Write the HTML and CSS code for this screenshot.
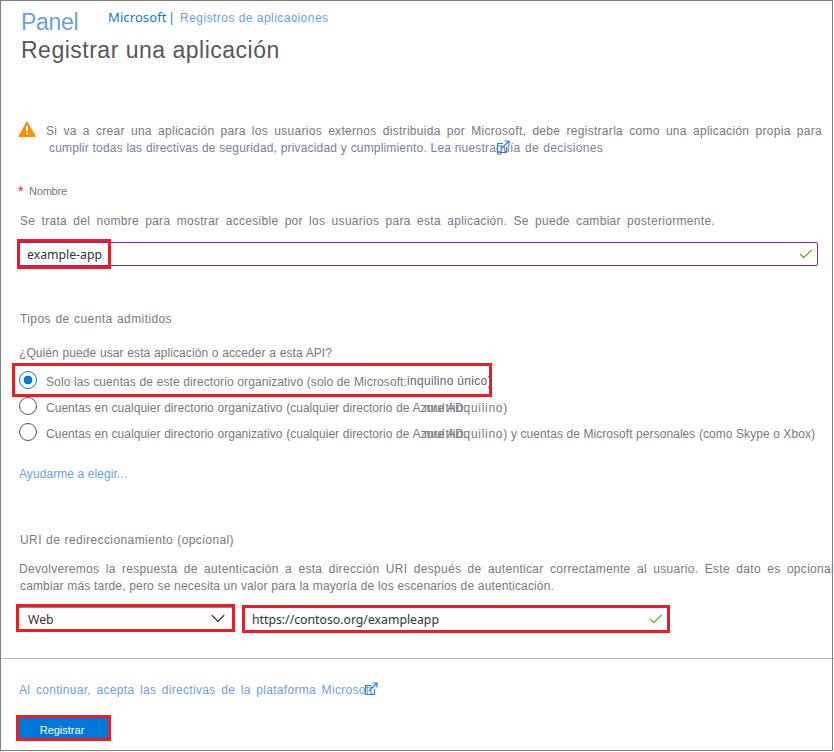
FILE: index.html
```html
<!DOCTYPE html>
<html lang="es">
<head>
<meta charset="utf-8">
<title>Registrar una aplicación</title>
<link rel="stylesheet" href="styles.css">
</head>
<body>
<main class="page">
  <header class="head">
    <div class="crumbs">
      <a class="panel">Panel</a>
      <a class="org">Microsoft |</a>
      <a class="regs">Registros de aplicaciones<svg class="chev" width="6" height="10" viewBox="0 0 6 10"><path d="M1 1l4 4-4 4" fill="none" stroke="#a9a9b0"/></svg></a>
    </div>
    <h1>Registrar una aplicación</h1>
  </header>

  <section class="notice">
    <svg class="warn" width="18" height="16" viewBox="0 0 18 16"><path d="M9 .8 17.3 15.4H.7z" fill="#ff8c00" stroke="#ff8c00" stroke-linejoin="round"/><path d="M8 5h2v5H8zM8 11.5h2v2H8z" fill="#fff"/></svg>
    <div class="notice-text">
      <p class="fit n1">Si va a crear una aplicación para los usuarios externos distribuida por Microsoft, debe registrarla como una aplicación propia para</p>
      <p class="n2"><span class="fit n2a">cumplir todas las directivas de seguridad, privacidad y cumplimiento. Lea nuestra</span><span class="fit n2b">guía de decisiones</span><svg class="ext ext-a" width="14" height="14" viewBox="0 0 14 14"><path d="M7 3.500H1.500v9h9V7M5 9l8-8M8.500 1H13v4.500" fill="none" stroke="#2f80e4" stroke-width="1.200"/></svg></p>
    </div>
  </section>

  <section class="name">
    <label><b class="star">*</b><span class="fit lname">Nombre</span></label>
    <p class="fit hint">Se trata del nombre para mostrar accesible por los usuarios para esta aplicación. Se puede cambiar posteriormente.</p>
    <div class="input name-input"><span class="fit val-name">example-app</span><svg class="check" width="14" height="10" viewBox="0 0 14 10"><path d="M1 5l3.700 3.500L12.800 1" fill="none" stroke="#6bb02e" stroke-width="1.300"/></svg><i class="mark mark-name"></i></div>
  </section>

  <section class="accounts">
    <h2 class="fit acc-title">Tipos de cuenta admitidos</h2>
    <p class="fit question">¿Quién puede usar esta aplicación o acceder a esta API?</p>
    <div class="option"><i class="radio on"></i><span class="fit o1">Solo las cuentas de este directorio organizativo (solo de Microsoft:</span><span class="fit o1b">inquilino único)</span><i class="mark mark-option"></i></div>
    <div class="option"><i class="radio"></i><span class="fit o2">Cuentas en cualquier directorio organizativo (cualquier directorio de Azure AD:</span><span class="fit o2b">multiinquilino)</span></div>
    <div class="option"><i class="radio"></i><span class="fit o2">Cuentas en cualquier directorio organizativo (cualquier directorio de Azure AD:</span><span class="fit o2b">multiinquilino)</span><span class="fit o3b">y cuentas de Microsoft personales (como Skype o Xbox)</span></div>
    <a class="fit help">Ayudarme a elegir...</a>
  </section>

  <section class="redirect">
    <h2 class="fit red-title">URI de redireccionamiento (opcional)</h2>
    <p class="fit r1">Devolveremos la respuesta de autenticación a esta dirección URI después de autenticar correctamente al usuario. Este dato es opcional</p>
    <p class="fit r2">cambiar más tarde, pero se necesita un valor para la mayoría de los escenarios de autenticación.</p>
    <div class="fields">
      <div class="field select"><span class="fit val-web">Web</span><svg width="14" height="9" viewBox="0 0 14 9"><path d="M.8 1.200 7 7.400l6.200-6.200" fill="none" stroke="#222" stroke-width="1.200"/></svg></div>
      <div class="field uri"><span class="fit val-uri">https://contoso.org/exampleapp</span><svg width="14" height="10" viewBox="0 0 14 10"><path d="M1 5l3.700 3.500L12.800 1" fill="none" stroke="#6bb02e" stroke-width="1.300"/></svg></div>
    </div>
  </section>

  <footer>
    <a class="terms"><span class="fit t1">Al continuar, acepta las directivas de la plataforma Microsoft</span><svg class="ext ext-b" width="14" height="14" viewBox="0 0 14 14"><path d="M7 3.500H1.500v9h9V7M5 9l8-8M8.500 1H13v4.500" fill="none" stroke="#2f80e4" stroke-width="1.200"/></svg></a>
    <button>Registrar</button>
  </footer>
</main>
</body>
</html>
```
FILE: styles.css
```css
*, *::after { box-sizing: border-box; }
body { margin: 0; background: #fff; overflow: hidden; }
.page { position: relative; width: 834px; height: 752px; padding-top: 1px; font: 12px/18px "Liberation Sans", Arial, sans-serif; color: #7b7780; }
.page::after { content: ""; position: absolute; left: 0; top: 0; width: 833px; height: 751px; border: 1px solid #7f7f7f; pointer-events: none; }
p, h1, h2 { margin: 0; font-weight: 400; }
h2 { font-size: 12px; }
.fit { display: block; white-space: nowrap; text-align: justify; text-align-last: justify; letter-spacing: .3px; }

.head { height: 118px; padding: 4px 0 0 21px; }
.crumbs { display: flex; height: 30px; color: #6b9fde; }
.panel { width: 87px; font-size: 23px; line-height: 35px; letter-spacing: -.3px; }
.org { width: 72px; font: 13px/24px "Noto Sans", "Open Sans", sans-serif; letter-spacing: .1px; word-spacing: -2px; color: #1079d4; }
.regs { position: relative; line-height: 26px; letter-spacing: .47px; white-space: nowrap; }
.chev { position: absolute; left: 112px; top: 8px; }
h1 { font-size: 23px; line-height: 30px; color: #5a5659; letter-spacing: .5px; }

.notice { display: flex; height: 64px; padding-left: 18px; }
.warn { margin-top: 2px; }
.notice-text { padding: 3px 0 0 10px; }
.n1 { width: 776px; }
.n2 { position: relative; display: flex; padding-left: 3px; margin-top: -1px; color: #75829f; }
.n2a { width: 447px; letter-spacing: .17px; }
.n2b { width: 107px; }
.ext { position: absolute; }
.ext-a { left: 450px; top: 1px; }

.name { height: 127px; padding-left: 18px; }
label { display: flex; height: 17px; }
.star { width: 11px; font-size: 14px; line-height: 16px; font-weight: 400; color: #e8202a; }
.lname { width: 38px; font-size: 11px; line-height: 16px; letter-spacing: -.2px; }
.hint { width: 695px; margin: 12px 0 0 2px; }
.input { position: relative; display: flex; align-items: center; justify-content: space-between; width: 800px; height: 24px; margin-top: 12px; padding: 0 4px 0 8px; border: 1px solid #8426a0; border-radius: 2px; }
.val-name, .val-web, .val-uri { padding-top: 2px; font: 12.25px/20px "Noto Sans", "Open Sans", sans-serif; letter-spacing: 0; color: #333; }
.mark { position: absolute; border: 3px solid #ed1c24; }
.mark-name { left: -2px; top: -4px; width: 94px; height: 30px; }

.accounts { height: 221px; padding-left: 19px; }
.acc-title { width: 152px; margin-left: 1px; letter-spacing: .4px; }
.question { width: 313px; margin: 16px 0 6px; letter-spacing: .08px; }
.option { position: relative; display: flex; align-items: center; height: 26px; top: -1px; }
.radio { flex: none; width: 18px; height: 18px; margin-right: 9px; border: 1px solid #555; border-radius: 50%; }
.radio.on { border-color: #0078d4; background: radial-gradient(circle, #0078d7 4px, transparent 4.700px); }
.option .fit { flex: none; padding-top: 3px; }
.option .o1 { width: 361px; letter-spacing: .1px; }
.option .o1b { width: 83px; margin-top: -2px; letter-spacing: .3px; color: #67606c; }
.mark-option { left: -7px; top: -4px; width: 480px; height: 34px; z-index: -1; }
.option .o2 { width: 421px; letter-spacing: .03px; }
.option .o2b { width: 85px; margin-left: -43px; letter-spacing: .7px; }
.option .o3b { width: 304px; margin-left: 2px; letter-spacing: .06px; }
.help { width: 108px; margin-top: 19px; letter-spacing: .08px; color: #6b9fde; }

.redirect { height: 127px; padding-left: 19px; }
.red-title { width: 214px; margin-left: 1px; letter-spacing: .4px; }
.r1 { width: 815px; margin-top: 11px; }
.r2 { width: 534px; margin: -1px 0 0 1px; letter-spacing: .15px; }
.fields { display: flex; gap: 7px; margin: 9px 0 0 -3px; }
.field { display: flex; align-items: center; justify-content: space-between; height: 28px; border: 3px solid #ed1c24; }
.select { width: 219px; padding: 1px 7px 0 9px; box-shadow: inset 0 1px #888; }
.uri { width: 428px; padding: 0 4px 0 7px; margin-top: 1px; }

footer { border-top: 1px solid #b7b7b7; padding: 22px 0 0 16px; }
.terms { position: relative; display: block; padding-left: 3px; color: #6b9fde; }
.t1 { width: 354px; }
.ext-b { left: 348px; top: 1px; }
button { display: block; width: 95px; height: 26px; margin-top: 16px; padding: 3px 3px 0 0; border: 3px solid #ed1c24; background: #0078d7; color: #fff; font: 11px/18px "Liberation Sans", Arial, sans-serif; letter-spacing: 0; }
```
